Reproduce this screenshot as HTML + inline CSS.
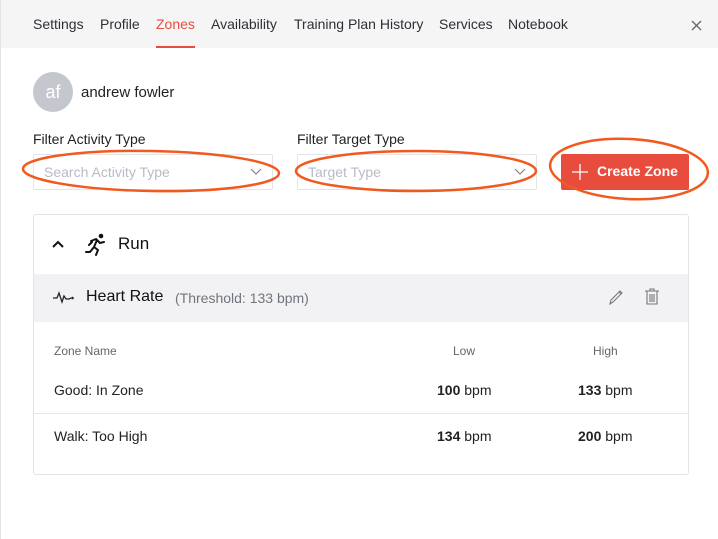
<!DOCTYPE html>
<html><head><meta charset="utf-8"><style>
*{margin:0;padding:0;box-sizing:border-box}
body{width:718px;height:539px;background:#fff;font-family:"Liberation Sans",sans-serif;color:#222;position:relative;overflow:hidden}
.a{position:absolute;white-space:nowrap}
.nav{position:absolute;left:0;top:0;width:718px;height:48px;background:#f5f5f6}
.nav span{position:absolute;top:16px;font-size:14px;color:#2c2f36}
.inp{position:absolute;top:154px;height:36px;border:1px solid #e3e4e7;border-radius:2px;font-size:14px;color:#b8bcc4;padding:9px 10px}
</style></head><body>
<div class="nav">
<span style="left:33px">Settings</span>
<span style="left:100px">Profile</span>
<span style="left:156px;color:#e84c3d">Zones</span>
<span style="left:211px">Availability</span>
<span style="left:294px">Training Plan History</span>
<span style="left:439px">Services</span>
<span style="left:508px">Notebook</span>
<div style="position:absolute;left:156px;top:46px;width:39px;height:2px;background:#e84c3d"></div>
<svg style="position:absolute;left:691px;top:20px" width="11" height="11"><path d="M1 1L10 10M10 1L1 10" stroke="#666" stroke-width="1.3"/></svg>
</div>
<div class="a" style="left:0;top:0;width:1px;height:539px;background:#e2e3e6"></div>
<div class="a" style="left:33px;top:72px;width:40px;height:40px;border-radius:50%;background:#c4c8ce;color:#fff;font-size:18px;text-align:center;line-height:40px">af</div>
<div class="a" style="left:81px;top:84px;font-size:15px">andrew fowler</div>
<div class="a" style="left:33px;top:131px;font-size:14px">Filter Activity Type</div>
<div class="a" style="left:297px;top:131px;font-size:14px">Filter Target Type</div>
<div class="inp" style="left:33px;width:240px">Search Activity Type</div>
<div class="inp" style="left:297px;width:240px">Target Type</div>
<svg class="a" style="left:250px;top:168px" width="12" height="8"><path d="M1 1L6 6L11 1" fill="none" stroke="#888" stroke-width="1.2"/></svg>
<svg class="a" style="left:514px;top:168px" width="12" height="8"><path d="M1 1L6 6L11 1" fill="none" stroke="#888" stroke-width="1.2"/></svg>
<div class="a" style="left:561px;top:154px;width:128px;height:36px;background:#e84c3d;border-radius:2px;color:#fff;font-size:14px;font-weight:bold;padding:9px 0 0 36px">Create Zone</div>
<svg class="a" style="left:572px;top:164px" width="16" height="16"><path d="M8 0V16M0 8H16" stroke="#fff" stroke-width="1.3"/></svg>
<svg class="a" style="left:0;top:0" width="718" height="539">
<ellipse cx="151" cy="171" rx="128" ry="20" fill="none" stroke="#f15a1f" stroke-width="2.5" transform="rotate(1 151 171)"/>
<ellipse cx="416" cy="171" rx="120" ry="20" fill="none" stroke="#f15a1f" stroke-width="2.5"/>
<ellipse cx="629" cy="169" rx="79" ry="30" fill="none" stroke="#f15a1f" stroke-width="2.5" transform="rotate(3 629 169)"/>
</svg>
<div class="a" style="left:33px;top:214px;width:656px;height:261px;border:1px solid #e3e4e7;border-radius:3px"></div>
<svg class="a" style="left:52px;top:240px" width="12" height="8"><path d="M1 7L6 2L11 7" fill="none" stroke="#111" stroke-width="2"/></svg>
<svg class="a" style="left:85px;top:233px" width="22" height="24" viewBox="0 0 22 24"><circle cx="16" cy="3" r="2.3" fill="#111"/><path d="M6 8L11 6L15 10L19 9M12 7L9 14L13 17L11 22M9 14L5 19H1M7 9L4 12" fill="none" stroke="#111" stroke-width="2" stroke-linecap="round" stroke-linejoin="round"/></svg>
<div class="a" style="left:118px;top:234px;font-size:17px;color:#111">Run</div>
<div class="a" style="left:34px;top:274px;width:654px;height:48px;background:#f2f2f4"></div>
<svg class="a" style="left:53px;top:290px" width="22" height="14"><path d="M0 8H4L6 3L9 12L11 6L13 9H16L18 8" fill="none" stroke="#222" stroke-width="1.3"/><circle cx="19.5" cy="8" r="1.3" fill="#222"/></svg>
<div class="a" style="left:86px;top:288px;font-size:16px;color:#111">Heart Rate</div>
<div class="a" style="left:175px;top:290px;font-size:14px;color:#70747c">(Threshold: 133 bpm)</div>
<svg class="a" style="left:607px;top:288px" width="18" height="18"><path d="M3 16L4 12L13 3L15 5L6 14Z M12 4L14 6" fill="none" stroke="#777" stroke-width="1.1"/></svg>
<svg class="a" style="left:644px;top:288px" width="16" height="18"><path d="M1 3H15M6 3V1H10V3M3 3V16H13V3M6 6V14M8 6V14M10 6V14" fill="none" stroke="#777" stroke-width="1.1"/></svg>
<div class="a" style="left:54px;top:344px;font-size:12px;color:#666">Zone Name</div>
<div class="a" style="left:453px;top:344px;font-size:12px;color:#666">Low</div>
<div class="a" style="left:593px;top:344px;font-size:12px;color:#666">High</div>
<div class="a" style="left:54px;top:382px;font-size:14px">Good: In Zone</div>
<div class="a" style="left:437px;top:382px;font-size:14px"><b>100</b> bpm</div>
<div class="a" style="left:578px;top:382px;font-size:14px"><b>133</b> bpm</div>
<div class="a" style="left:34px;top:413px;width:654px;height:1px;background:#e6e7ea"></div>
<div class="a" style="left:54px;top:428px;font-size:14px">Walk: Too High</div>
<div class="a" style="left:437px;top:428px;font-size:14px"><b>134</b> bpm</div>
<div class="a" style="left:578px;top:428px;font-size:14px"><b>200</b> bpm</div>
</body></html>
